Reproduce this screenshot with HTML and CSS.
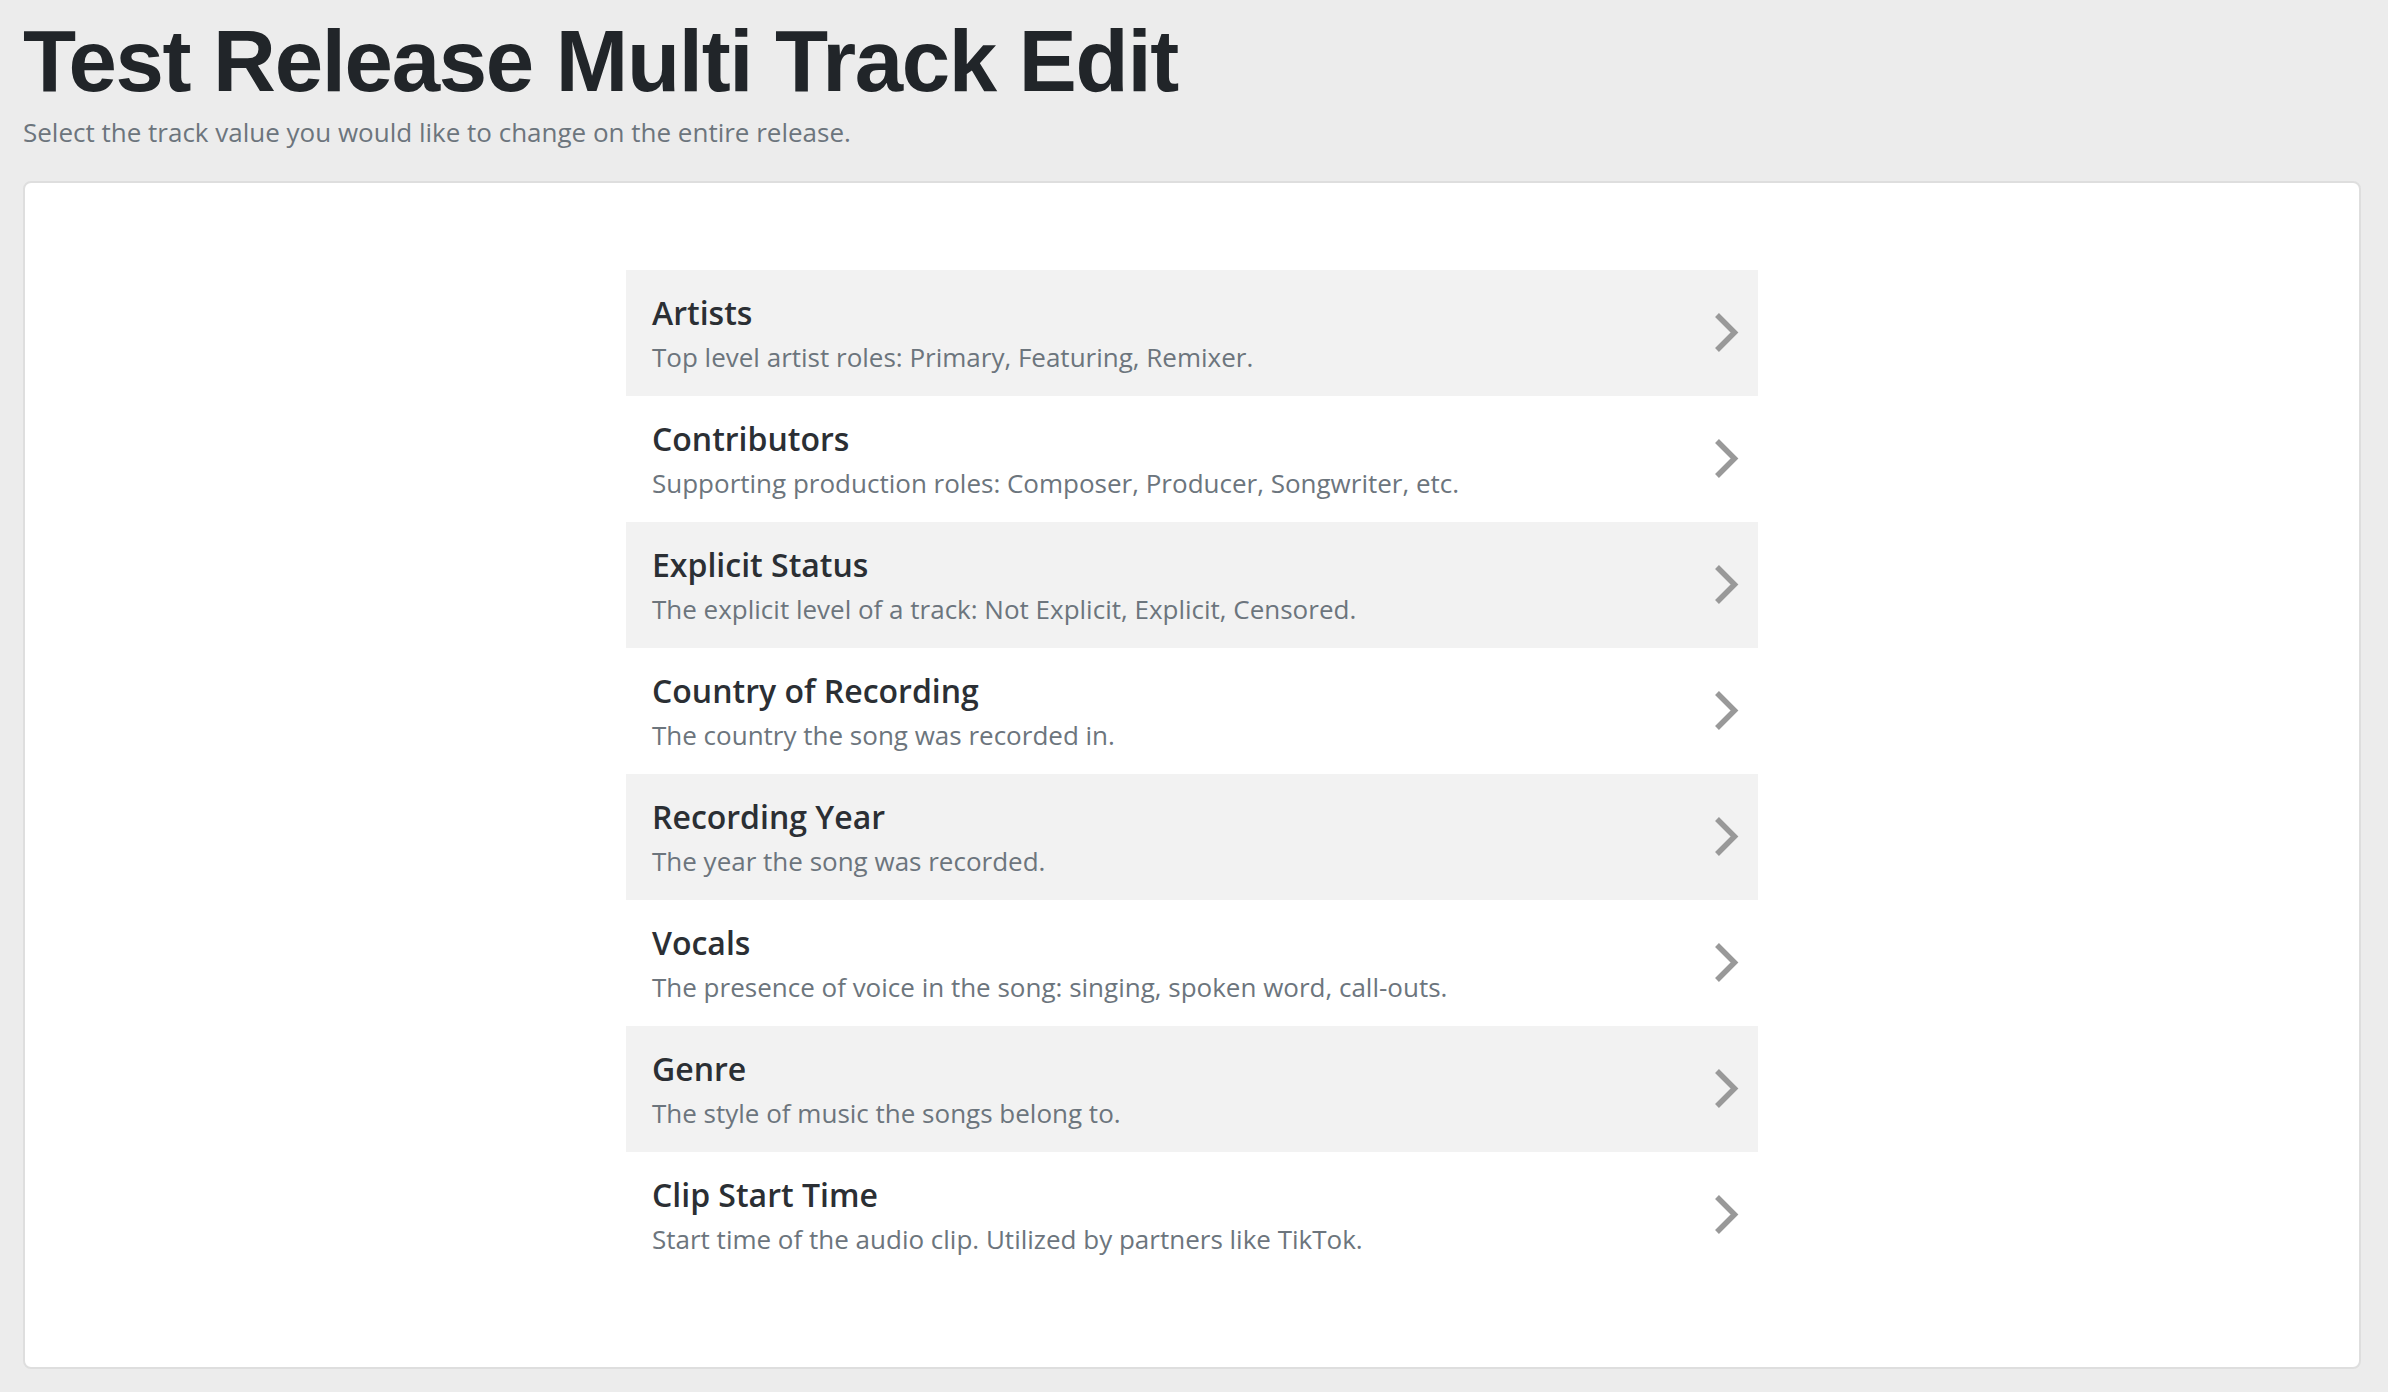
FILE: index.html
```html
<!DOCTYPE html>
<html>
    <head>
        <meta charset="utf-8">
        <title>Test Release Multi Track Edit</title>
        <meta name="viewport" content="width=device-width, initial-scale=1">
        <link rel="stylesheet" href="styles.css">
    </head>
    <body>
        <main id="multi-edit">
            <h1 class="page-title">Test Release Multi Track Edit</h1>
            <p class="page-lead">Select the track value you would like to change on the entire release.</p>
            <div class="card">
                <ul class="field-list">
                    <li class="field">
                        <div class="field-text">
                            <h2>Artists</h2>
                            <p>Top level artist roles: Primary, Featuring, Remixer.</p>
                        </div>
                        <svg class="chevron" viewBox="0 0 24 41"><polyline points="2,3 19.5,20.5 2,38"/></svg>
                    </li>
                    <li class="field">
                        <div class="field-text">
                            <h2>Contributors</h2>
                            <p>Supporting production roles: Composer, Producer, Songwriter, etc.</p>
                        </div>
                        <svg class="chevron" viewBox="0 0 24 41"><polyline points="2,3 19.5,20.5 2,38"/></svg>
                    </li>
                    <li class="field">
                        <div class="field-text">
                            <h2>Explicit Status</h2>
                            <p>The explicit level of a track: Not Explicit, Explicit, Censored.</p>
                        </div>
                        <svg class="chevron" viewBox="0 0 24 41"><polyline points="2,3 19.5,20.5 2,38"/></svg>
                    </li>
                    <li class="field">
                        <div class="field-text">
                            <h2>Country of Recording</h2>
                            <p>The country the song was recorded in.</p>
                        </div>
                        <svg class="chevron" viewBox="0 0 24 41"><polyline points="2,3 19.5,20.5 2,38"/></svg>
                    </li>
                    <li class="field">
                        <div class="field-text">
                            <h2>Recording Year</h2>
                            <p>The year the song was recorded.</p>
                        </div>
                        <svg class="chevron" viewBox="0 0 24 41"><polyline points="2,3 19.5,20.5 2,38"/></svg>
                    </li>
                    <li class="field">
                        <div class="field-text">
                            <h2>Vocals</h2>
                            <p>The presence of voice in the song: singing, spoken word, call-outs.</p>
                        </div>
                        <svg class="chevron" viewBox="0 0 24 41"><polyline points="2,3 19.5,20.5 2,38"/></svg>
                    </li>
                    <li class="field">
                        <div class="field-text">
                            <h2>Genre</h2>
                            <p>The style of music the songs belong to.</p>
                        </div>
                        <svg class="chevron" viewBox="0 0 24 41"><polyline points="2,3 19.5,20.5 2,38"/></svg>
                    </li>
                    <li class="field">
                        <div class="field-text">
                            <h2>Clip Start Time</h2>
                            <p>Start time of the audio clip. Utilized by partners like TikTok.</p>
                        </div>
                        <svg class="chevron" viewBox="0 0 24 41"><polyline points="2,3 19.5,20.5 2,38"/></svg>
                    </li>
                </ul>
            </div>
        </main>
    </body>
</html>
```

FILE: styles.css
```css
*{
    box-sizing: border-box;
}
body{
    margin: 0;
    background-color: #ececec;
    font-family: "Open Sans", "Liberation Sans", sans-serif;
    color: #212529;
}
#multi-edit{
    padding: 17px 27px 0 23px;
}
.page-title{
    margin: 0;
    font-family: "Liberation Sans", Arial, sans-serif;
    font-weight: bold;
    font-size: 87px;
    line-height: 87px;
    letter-spacing: -1.3px;
    color: #212529;
}
.page-lead{
    margin: 11px 0 32px 0;
    font-size: 26px;
    line-height: 34px;
    color: #6c757d;
}
.card{
    background-color: #fff;
    border: 2px solid #dedede;
    border-radius: 8px;
    padding: 87px 0 89px 0;
}
.field-list{
    list-style: none;
    margin: 0 auto;
    padding: 0;
    width: 1132px;
}
.field{
    display: flex;
    align-items: center;
    justify-content: space-between;
    height: 126px;
    padding: 1px 19px 2px 26px;
}
.field:nth-child(odd){
    background-color: #f2f2f2;
}
.field-text h2{
    margin: 0;
    font-size: 32px;
    line-height: 42px;
    font-weight: 600;
    color: #2b2f34;
}
.field-text p{
    margin: 6px 0 0 0;
    font-size: 26px;
    line-height: 34px;
    color: #6c757d;
}
.chevron{
    width: 24px;
    height: 41px;
    flex: none;
}
.chevron polyline{
    fill: none;
    stroke: #999;
    stroke-width: 5.5;
    stroke-linejoin: miter;
}
```
